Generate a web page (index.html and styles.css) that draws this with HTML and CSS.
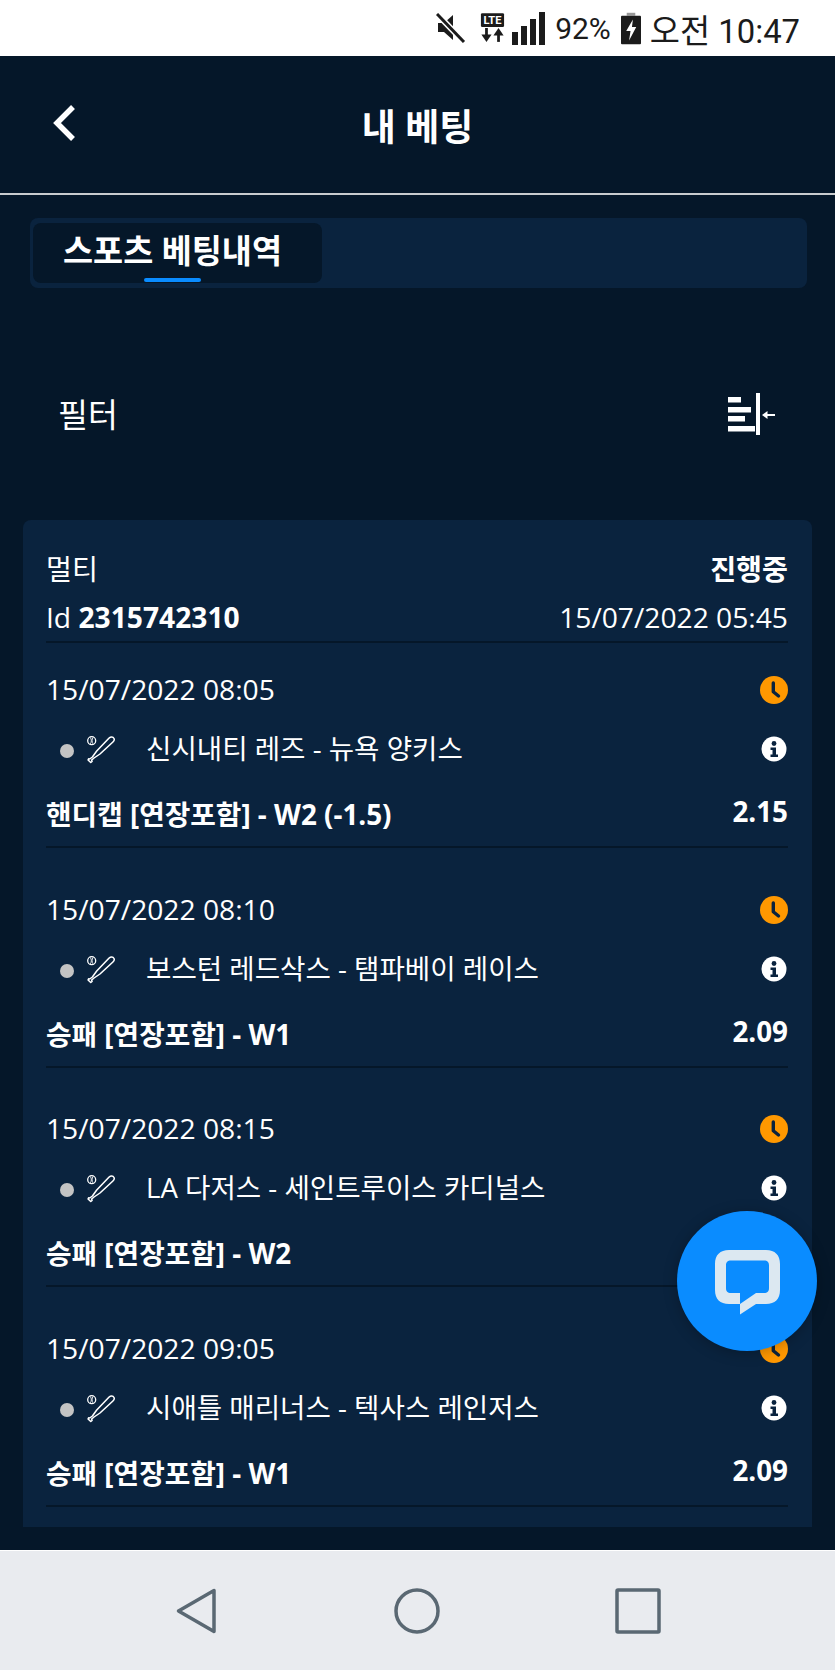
FILE: index.html
```html
<!DOCTYPE html>
<html lang="ko">
<head>
  <meta charset="UTF-8" />
  <meta name="viewport" content="width=device-width, initial-scale=1.0" />
  <title>내 베팅</title>
  <link rel="stylesheet" href="styles.css">
</head>
<body>
  <svg class="icon-defs" width="0" height="0">
    <symbol id="clock" viewBox="0 0 28 28">
      <circle cx="14" cy="14" r="14" fill="#ff9800"/>
      <path d="M13.300 7v8.700l5.200 4.300" fill="none" stroke="#0a233e" stroke-width="3.400" stroke-linecap="round" stroke-linejoin="round"/>
    </symbol>
    <symbol id="info" viewBox="0 0 26 26">
      <circle cx="13" cy="13" r="12.500" fill="#fff"/>
      <circle cx="13" cy="7.500" r="2.400" fill="#0a233e"/>
      <path d="M9.500 11.500h5.500v7h2v2.500H9.500v-2.500h2v-4.500h-2z" fill="#0a233e"/>
    </symbol>
    <symbol id="baseball" viewBox="0 0 28 30">
      <circle cx="4.700" cy="6.700" r="4" fill="none" stroke="#fff" stroke-width="1.300"/>
      <path d="M3.400 3.500c1.200 2 1.200 4.500 0 6.400M6 3.500c-1.200 2-1.200 4.500 0 6.400" fill="none" stroke="#fff" stroke-width=".9"/>
      <path transform="scale(1.08 1)" d="M25 4.500C24 2.500 22 2.500 20.500 4L9 17l-4 6-2.500 2-1-.3-.5 1.300 2.500 2.500 1.200-1-.4-1.500 2.200-2L12 20 24 8c1-1 1.500-2.500 1-3.500z" fill="none" stroke="#fff" stroke-width="1.400" stroke-linejoin="round"/>
    </symbol>
  </svg>

  <div class="screen">
    <div class="status-bar">
      <svg class="st-mute" width="30" height="30" viewBox="0 0 30 30">
        <path d="M2 10h6l9-8v25l-9-8H2z" fill="#1b1b1b"/>
        <path d="M1 1l27 28" stroke="#fff" stroke-width="6"/>
        <path d="M1 1l27 28" stroke="#1b1b1b" stroke-width="3"/>
      </svg>
      <svg class="st-lte" width="25" height="30" viewBox="0 0 27 32">
        <rect x="1" y="0" width="25" height="15" rx="1.500" fill="#1b1b1b"/>
        <text class="lte-text" x="13.500" y="12">LTE</text>
        <path d="M7 16v9" stroke="#1b1b1b" stroke-width="3"/>
        <path d="M1.500 23h11L7 31z" fill="#1b1b1b"/>
        <path d="M20 31v-9" stroke="#1b1b1b" stroke-width="3"/>
        <path d="M14.500 24h11L20 16z" fill="#1b1b1b"/>
      </svg>
      <svg class="st-signal" width="33" height="33" viewBox="0 0 33 33">
        <path d="M0 20h6v13H0zM9 14h6v19H9zM18 7h6v26h-6zM27 0h6v33h-6z" fill="#1b1b1b"/>
      </svg>
      <span class="st-batt">92%</span>
      <svg class="st-battery" width="20" height="33" viewBox="0 0 21 33">
        <rect x="6" y="0" width="9" height="3" fill="#999"/>
        <rect x="0" y="3" width="21" height="30" rx="1" fill="#1b1b1b"/>
        <path d="M12.500 7L5.500 19h4.500l-1.500 10 7.500-14h-4.500z" fill="#fff"/>
      </svg>
      <span class="st-time">오전 10:47</span>
    </div>

    <div class="app">
      <header class="top-bar">
        <svg class="back" width="24" height="38" viewBox="0 0 24 38">
          <path d="M21 3L5 19l16 16" fill="none" stroke="#fff" stroke-width="5.500"/>
        </svg>
        <h1>내 베팅</h1>
      </header>

      <div class="tabs">
        <div class="tab active">스포츠 베팅내역</div>
      </div>

      <div class="filter-row">
        <span>필터</span>
        <svg width="47" height="42" viewBox="0 0 47 42">
          <path d="M0 4h13v5.500H0zM0 14h23v5.500H0zM0 23h17v5.500H0zM0 33h27v5.500H0z" fill="#fff"/>
          <rect x="28" y="0" width="4" height="42" fill="#fff"/>
          <path d="M37 21.100h10v1.800H37zM34 22l5.500-4v8z" fill="#fff"/>
        </svg>
      </div>

      <section class="card">
        <div class="card-head">
          <div class="head-row head-first">
            <span>멀티</span>
            <b>진행중</b>
          </div>
          <div class="head-row">
            <span>Id <b>2315742310</b></span>
            <span>15/07/2022 05:45</span>
          </div>
        </div>

        <div class="bet">
          <div class="bet-date">
            <span>15/07/2022 08:05</span>
            <svg class="ic-clock"><use href="#clock"/></svg>
          </div>
          <div class="bet-match">
            <i class="dot"></i>
            <svg class="ic-sport"><use href="#baseball"/></svg>
            <span class="teams">신시내티 레즈 - 뉴욕 양키스</span>
            <svg class="ic-info"><use href="#info"/></svg>
          </div>
          <div class="bet-market">
            <b>핸디캡 [연장포함] - W2 (-1.5)</b>
            <b class="odds">2.15</b>
          </div>
        </div>

        <div class="bet">
          <div class="bet-date">
            <span>15/07/2022 08:10</span>
            <svg class="ic-clock"><use href="#clock"/></svg>
          </div>
          <div class="bet-match">
            <i class="dot"></i>
            <svg class="ic-sport"><use href="#baseball"/></svg>
            <span class="teams">보스턴 레드삭스 - 탬파베이 레이스</span>
            <svg class="ic-info"><use href="#info"/></svg>
          </div>
          <div class="bet-market">
            <b>승패 [연장포함] - W1</b>
            <b class="odds">2.09</b>
          </div>
        </div>

        <div class="bet">
          <div class="bet-date">
            <span>15/07/2022 08:15</span>
            <svg class="ic-clock"><use href="#clock"/></svg>
          </div>
          <div class="bet-match">
            <i class="dot"></i>
            <svg class="ic-sport"><use href="#baseball"/></svg>
            <span class="teams">LA 다저스 - 세인트루이스 카디널스</span>
            <svg class="ic-info"><use href="#info"/></svg>
          </div>
          <div class="bet-market">
            <b>승패 [연장포함] - W2</b>
          </div>
        </div>

        <div class="bet">
          <div class="bet-date">
            <span>15/07/2022 09:05</span>
            <svg class="ic-clock"><use href="#clock"/></svg>
          </div>
          <div class="bet-match">
            <i class="dot"></i>
            <svg class="ic-sport"><use href="#baseball"/></svg>
            <span class="teams">시애틀 매리너스 - 텍사스 레인저스</span>
            <svg class="ic-info"><use href="#info"/></svg>
          </div>
          <div class="bet-market">
            <b>승패 [연장포함] - W1</b>
            <b class="odds">2.09</b>
          </div>
        </div>
      </section>

      <button class="chat-btn" type="button" aria-label="chat">
        <svg width="65" height="65" viewBox="0 0 65 65">
          <path fill-rule="evenodd" fill="#dce8f1" d="M14 0H51C60 0 65 5 65 14V40C65 49 60 54 51 54H41L25 64.500V54H14C5 54 0 49 0 40V14C0 5 5 0 14 0ZM16 10.500C12.500 10.500 11 12 11 15.500V38C11 41.500 12.500 43 16 43H25V54L41 43H49C52.500 43 54 41.500 54 38V15.500C54 12 52.500 10.500 49 10.500Z"/>
        </svg>
      </button>
    </div>

    <nav class="nav-bar">
      <svg width="40" height="46" viewBox="0 0 40 46">
        <path d="M38 2.500v41L2.500 23z" fill="none" stroke="#5a6873" stroke-width="3.500" stroke-linejoin="round"/>
      </svg>
      <svg width="46" height="46" viewBox="0 0 46 46">
        <circle cx="23" cy="23" r="21" fill="none" stroke="#5a6873" stroke-width="3.500"/>
      </svg>
      <svg width="46" height="46" viewBox="0 0 46 46">
        <rect x="2" y="2" width="42" height="42" rx="1" fill="none" stroke="#5a6873" stroke-width="3.500"/>
      </svg>
    </nav>
  </div>
</body>
</html>
```

FILE: styles.css
```css
* {
  box-sizing: border-box;
}

body {
  margin: 0;
  background: #051729;
  font-family: "Open Sans", "Noto Sans CJK KR", sans-serif;
  color: #fff;
}

.icon-defs {
  display: block;
  height: 0;
}

.screen {
  display: flex;
  flex-direction: column;
  height: 1670px;
  overflow: hidden;
}

/* android status bar */
.status-bar {
  height: 56px;
  flex: none;
  background: #fff;
  color: #1b1b1b;
  display: flex;
  align-items: center;
  justify-content: flex-end;
  padding-right: 35px;
  font-family: Roboto, "Noto Sans CJK KR", sans-serif;
}

.st-time {
  font-size: 32.8px;
}

.st-batt {
  font-size: 30px;
}

.st-mute {
  margin-right: 14px;
}

.st-lte {
  margin-right: 7px;
}

.lte-text {
  font-family: Roboto, sans-serif;
  font-size: 12px;
  font-weight: 700;
  fill: #fff;
  text-anchor: middle;
}

.st-signal {
  margin-right: 10px;
}

.st-battery {
  margin: 0 9px 0 10px;
}

.app {
  flex: 1;
  position: relative;
  min-height: 0;
  display: flex;
  flex-direction: column;
  padding-bottom: 23px;
}

.top-bar {
  height: 139px;
  flex: none;
  border-bottom: 2px solid #c9ccce;
  display: flex;
  align-items: center;
  justify-content: center;
  position: relative;
}

.top-bar h1 {
  margin: 0;
  font-size: 37px;
  font-weight: 700;
}

.back {
  position: absolute;
  left: 52px;
  top: 48px;
}

.tabs {
  flex: none;
  margin: 23px 28px 0 30px;
  height: 70px;
  padding: 5px 3px;
  background: #0a233e;
  border-radius: 8px;
}

.tab {
  width: 289px;
  height: 60px;
  padding-left: 30px;
  background: #051729;
  border-radius: 8px;
  font-size: 32.7px;
  font-weight: 700;
  line-height: 56px;
  position: relative;
}

.tab.active::after {
  content: "";
  position: absolute;
  left: 111px;
  bottom: 1px;
  width: 57px;
  height: 4px;
  border-radius: 2px;
  background: #0a8cff;
}

.filter-row {
  flex: none;
  height: 232px;
  padding: 18px 60px 0 58px;
  display: flex;
  align-items: center;
  justify-content: space-between;
  font-size: 32.5px;
}

.filter-row svg {
  margin-top: 2px;
}

.card {
  flex: 1;
  min-height: 0;
  overflow: hidden;
  margin: 0 23px;
  padding: 0 24px 0 23px;
  background: #0a233e;
  border-radius: 8px 8px 0 0;
  font-size: 28.2px;
}

.card-head {
  height: 123px;
  padding-top: 23px;
  border-bottom: 2px solid #051729;
}

.head-row {
  display: flex;
  justify-content: space-between;
  align-items: center;
  height: 44px;
  line-height: 44px;
}

.head-first {
  height: 52px;
}

.bet {
  height: 205px;
  margin-bottom: 14.5px;
  padding-top: 24px;
  border-bottom: 2px solid #051729;
}

.bet-date,
.bet-match,
.bet-market {
  display: flex;
  align-items: center;
  justify-content: space-between;
}

.bet-date {
  height: 44px;
}

.ic-clock {
  width: 28px;
  height: 28px;
  margin-top: 2px;
}

.bet-match {
  height: 44px;
  margin-top: 14px;
  padding-left: 14px;
  font-size: 27.6px;
}

.dot {
  width: 14px;
  height: 14px;
  border-radius: 50%;
  background: #c4c4c4;
  margin-top: 8px;
}

.ic-sport {
  width: 28px;
  height: 30px;
  margin: 4px 0 0 13px;
}

.teams {
  flex: 1;
  margin-left: 31px;
}

.ic-info {
  width: 26px;
  height: 26px;
  margin: 4px 1px 0 0;
}

.bet-market {
  height: 44px;
  margin-top: 22px;
  font-size: 27.8px;
}

.bet-market .odds {
  margin-bottom: 4px;
}

.chat-btn {
  position: absolute;
  left: 677px;
  top: 1155px;
  width: 140px;
  height: 140px;
  padding: 3px 0 0 0;
  border: none;
  border-radius: 50%;
  background: #0a8cff;
  box-shadow: 0 2px 14px rgba(0, 0, 0, 0.25);
  display: flex;
  align-items: center;
  justify-content: center;
}

/* android nav bar */
.nav-bar {
  height: 120px;
  flex: none;
  background: #e9ebef;
  border-top: 1px solid #fff;
  padding-right: 1px;
  display: grid;
  grid-template-columns: repeat(3, 221px);
  justify-content: center;
  justify-items: center;
  align-items: center;
}
```
